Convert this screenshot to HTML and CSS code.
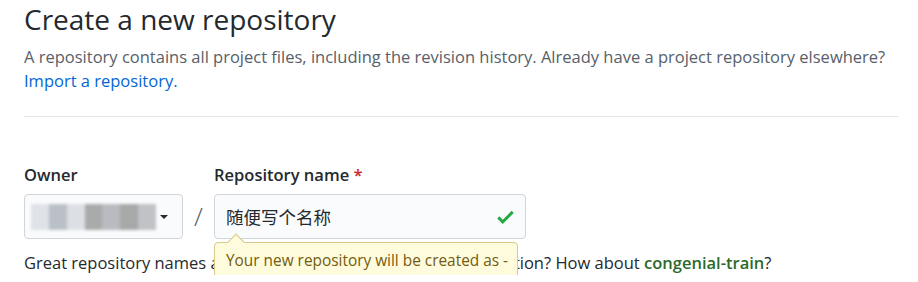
FILE: index.html
```html
<!DOCTYPE html>
<html lang="en">
<head>
  <meta charset="UTF-8" />
  <title>Create a new repository</title>
  <link rel="stylesheet" href="styles.css">
</head>
<body>
  <div class="container">
    <div class="subhead">
      <h2>Create a new repository</h2>
      <p class="lead">A repository contains all project files, including the revision history. Already have a project repository elsewhere? <a href="#">Import a repository.</a></p>
    </div>

    <div class="owner-reponame">
      <div class="field">
        <label>Owner</label>
        <div class="select-box">
          <span class="blur">
            <i class="b1"></i><i class="b2"></i><i class="b3"></i><i class="b4"></i><i class="b5"></i><i class="b6"></i><i class="b7"></i>
          </span>
          <span class="caret"></span>
        </div>
      </div>
      <span class="slash">/</span>
      <div class="field repo-field">
        <label>Repository name <span class="req">*</span></label>
        <div class="input-box">
          <span class="value">随便写个名称</span>
          <svg class="check" width="17" height="22" viewBox="0 0 12 16"><path fill="#28a745" d="M12 5l-8 8-4-4 1.5-1.5L4 10l6.5-6.5L12 5z"/></svg>
        </div>
        <div class="tooltip">Your new repository will be created as -</div>
      </div>
    </div>

    <p class="note">Great repository names are short and memorable. Need inspiration? How about <strong>congenial-train</strong>?</p>
  </div>
</body>
</html>
```

FILE: styles.css
```css
body {
  margin: 0;
  font-family: "Open Sans", "Noto Sans CJK SC", sans-serif;
  color: #24292e;
  background: #fff;
}

.container {
  padding: 0 20px 0 24px;
}

.subhead {
  border-bottom: 1px solid #e1e4e8;
  padding-bottom: 23px;
}

h2 {
  margin: 0;
  font-size: 28px;
  font-weight: 400;
  line-height: 38px;
}

.lead {
  margin: 7px 0 0;
  font-size: 16.5px;
  line-height: 24px;
  color: #586069;
}

.lead a {
  color: #0366d6;
  text-decoration: none;
}

.owner-reponame {
  display: flex;
  align-items: flex-end;
  margin-top: 46px;
}

.field label {
  display: block;
  font-size: 16.5px;
  font-weight: 600;
  line-height: 24px;
  margin-bottom: 7px;
}

.req {
  color: #cb2431;
}

.select-box,
.input-box {
  box-sizing: border-box;
  height: 45px;
  border: 1px solid #d1d5da;
  border-radius: 4px;
  background: #fafbfc;
  display: flex;
  align-items: center;
}

.select-box {
  width: 159px;
  padding: 0 14px 0 6px;
}

.blur {
  display: flex;
  flex: 1;
  height: 26px;
  filter: blur(1.5px);
}

.blur i {
  flex: 1;
  height: 100%;
}

.b1 { background: #dfe2e6; }
.b2 { background: #b9c0c8; }
.b3 { background: #dcdfe3; }
.b4 { background: #a9abab; }
.b5 { background: #b8bbbf; }
.b6 { background: #a7a9a8; }
.b7 { background: #c0c2c5; }

.caret {
  margin-left: 4px;
  border-top: 4px solid #24292e;
  border-left: 4px solid transparent;
  border-right: 4px solid transparent;
}

.slash {
  width: 31px;
  text-align: center;
  font-size: 26px;
  font-weight: 300;
  line-height: 45px;
  color: #586069;
}

.repo-field {
  position: relative;
}

.input-box {
  width: 312px;
  padding: 0 11px;
  justify-content: space-between;
}

.value {
  font-size: 17.5px;
}

.tooltip {
  position: absolute;
  left: 0;
  top: 79px;
  box-sizing: border-box;
  width: 304px;
  height: 38px;
  padding: 0 10px 0 11px;
  background: #fffbdd;
  border: 1px solid #d9c98a;
  border-radius: 4px;
  color: #735c0f;
  font-size: 15.4px;
  line-height: 36px;
  white-space: nowrap;
}

.tooltip::before {
  content: "";
  position: absolute;
  left: 15px;
  top: -7px;
  width: 11px;
  height: 11px;
  background: #fffbdd;
  border-left: 1px solid #d9c98a;
  border-top: 1px solid #d9c98a;
  transform: rotate(45deg);
}

.note {
  margin: 12px 0 0;
  font-size: 16.5px;
  line-height: 24px;
  color: #24292e;
}

.note strong {
  color: #2b6a2b;
  font-weight: 600;
}
```
